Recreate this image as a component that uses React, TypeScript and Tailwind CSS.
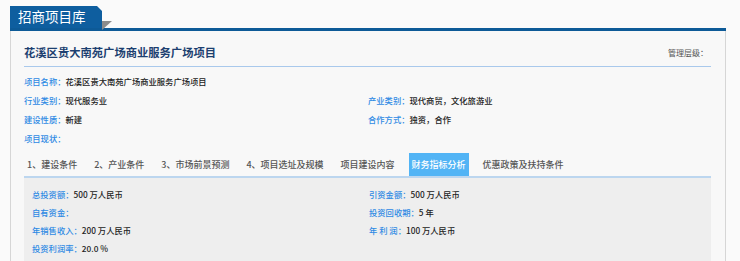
const labelCls = "text-[#2f8ae4]"
const valueCls = "text-[#222]"

function Field({ label, value }: { label: string; value?: string }) {
  return (
    <div className="flex items-center whitespace-nowrap">
      <span className={labelCls}>{label}：</span>
      <span className={valueCls}>{value}</span>
    </div>
  )
}

const tabs = [
  "1、建设条件",
  "2、产业条件",
  "3、市场前景预测",
  "4、项目选址及规模",
  "项目建设内容",
  "财务指标分析",
  "优惠政策及扶持条件",
]

export default function App() {
  const active = 5
  return (
    <div className="w-[740px] h-[261px] overflow-hidden bg-[#fafafa] font-['Noto_Sans_CJK_SC','Liberation_Sans',sans-serif]">
      <div className="pl-[10px] pt-[6px] w-[726px]">
        <div className="relative h-[22px]">
          <div className="h-[22px] w-[92px] bg-[#0e5e9f] [clip-path:polygon(0_0,87px_0,92px_5px,92px_100%,0_100%)] flex items-center pl-[8px] text-white text-[13.5px] leading-none">
            招商项目库
          </div>
          <svg className="absolute left-[92px] top-[15px]" width="10" height="9" viewBox="0 0 10 9">
            <polygon points="0,0 10,0 0,9" fill="#8c8c8c" />
          </svg>
        </div>
        <div className="h-[3px] bg-[#0d5a97]" />
        <div className="border-l border-r border-[#d6d6d6] bg-[#f8f8f8] pl-[13px] pr-[14px]">
          <div className="h-[36px] pt-[9px] border-b border-[#a9c9ec] flex items-center justify-between">
            <span className="text-[11.3px] font-bold text-[#1c3f70] leading-none">花溪区贵大南苑广场商业服务广场项目</span>
            <span className="text-[8px] text-[#555] pr-[3px] leading-none">管理层级：</span>
          </div>

          <div className="mt-[4px] grid grid-cols-[344px_1fr] auto-rows-[19.3px] text-[8.3px] font-medium leading-none">
            <div className="col-span-2 flex items-center">
              <Field label="项目名称" value="花溪区贵大南苑广场商业服务广场项目" />
            </div>
            <Field label="行业类别" value="现代服务业" />
            <Field label="产业类别" value="现代商贸，文化旅游业" />
            <Field label="建设性质" value="新建" />
            <Field label="合作方式" value="独资，合作" />
            <div className="col-span-2 flex items-center">
              <Field label="项目现状" />
            </div>
          </div>

          <div className="mt-[5px] h-[23px] flex items-stretch gap-[11px] text-[9px] font-medium leading-none">
            {tabs.map((t, i) => (
              <div
                key={t}
                className={
                  i === active
                    ? "px-[3px] flex items-center bg-[#52b4f5] text-white"
                    : "px-[3px] flex items-center text-[#555]"
                }
              >
                {t}
              </div>
            ))}
          </div>

          <div className="border-t-2 border-[#bcd6ef] bg-[#eeeeee] h-[90px] pt-[7px] pl-[8px]">
            <div className="grid grid-cols-[337px_1fr] auto-rows-[18px] text-[8.3px] font-medium leading-none">
              <Field label="总投资额" value="500 万人民币" />
              <Field label="引资金额" value="500 万人民币" />
              <Field label="自有资金" />
              <Field label="投资回收期" value="5 年" />
              <Field label="年销售收入" value="200 万人民币" />
              <Field label="年 利 润" value="100 万人民币" />
              <Field label="投资利润率" value="20.0 %" />
            </div>
          </div>
        </div>
      </div>
    </div>
  )
}
